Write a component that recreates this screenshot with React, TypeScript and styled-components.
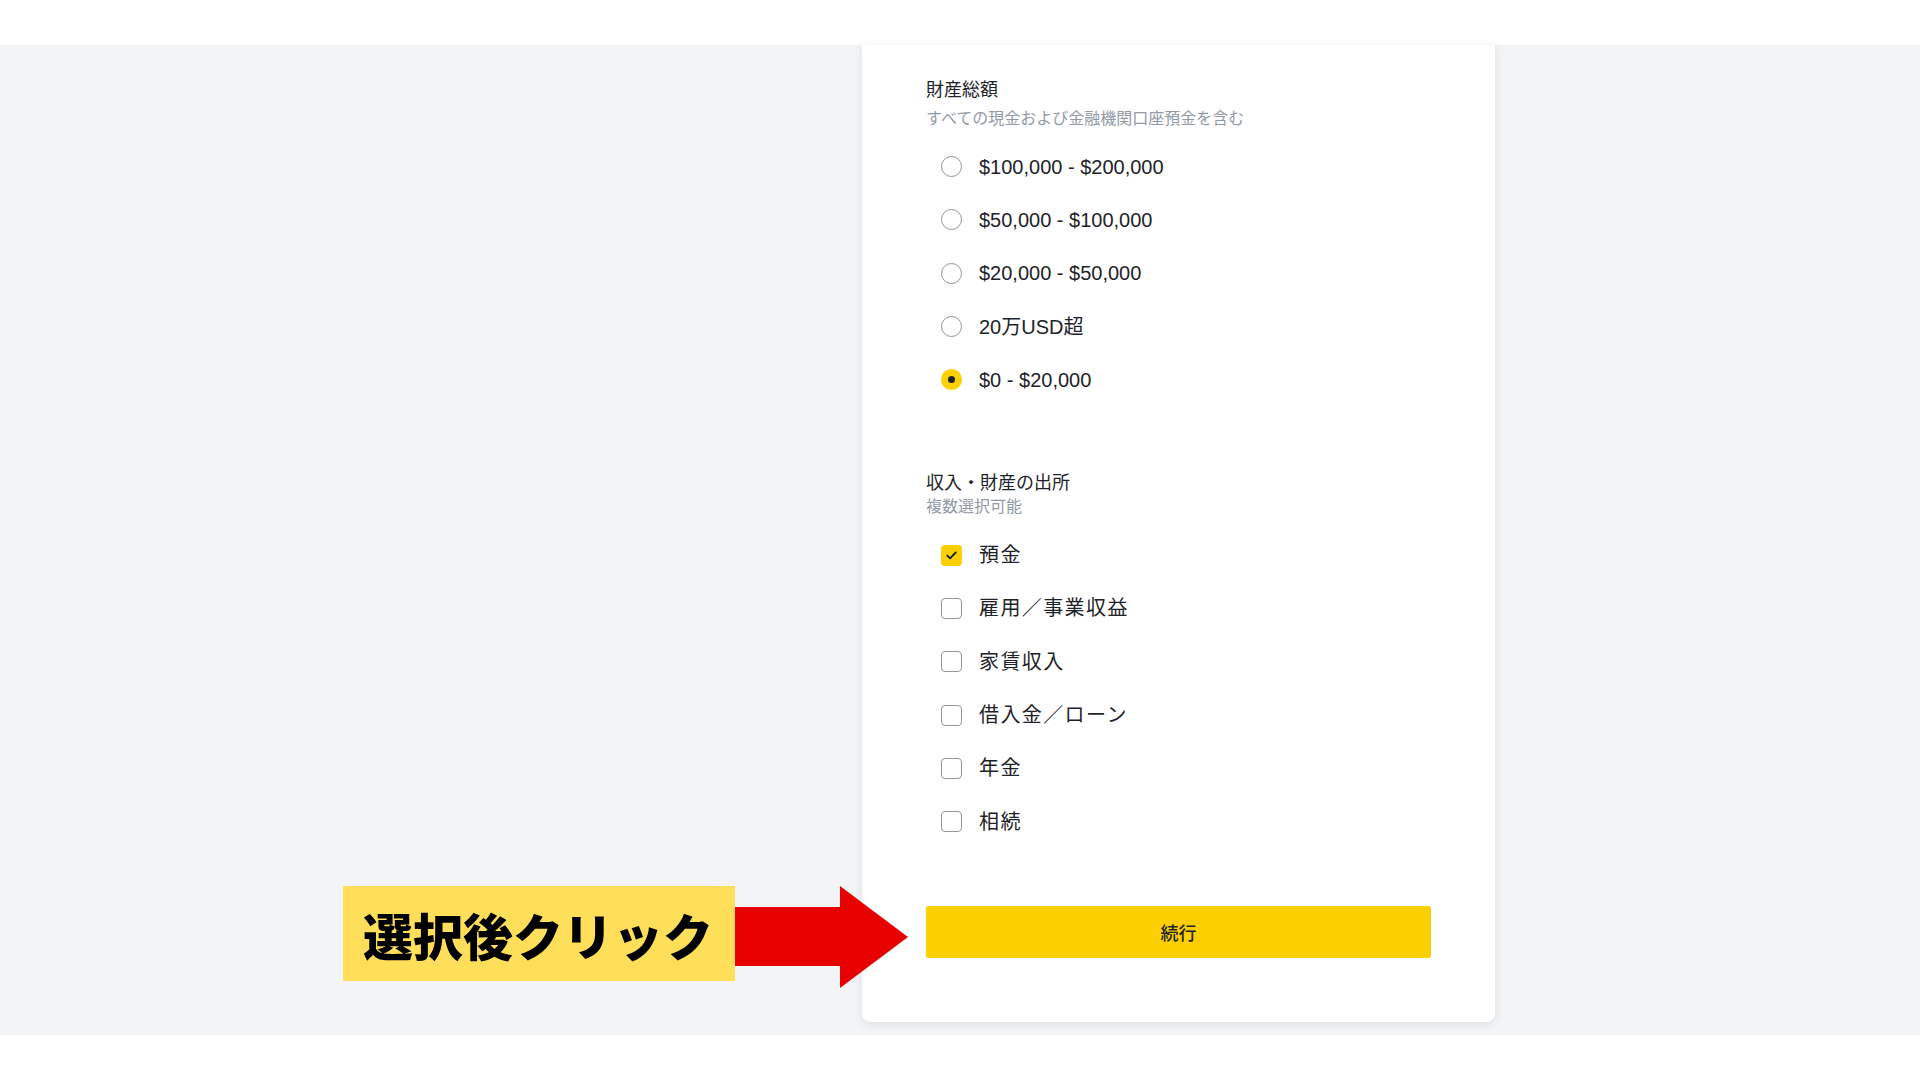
import styled, { createGlobalStyle } from "styled-components";

const GlobalStyle = createGlobalStyle`
  body {
    margin: 0;
    background: #ffffff;
    font-family: "Liberation Sans", "Noto Sans CJK JP", sans-serif;
    color: #1e2329;
  }
`;

const Page = styled.div`
  position: relative;
  width: 1920px;
  height: 1080px;
  padding: 45px 0;
  box-sizing: border-box;
`;

const Band = styled.div`
  display: flex;
  align-items: flex-start;
  height: 990px;
  padding-left: 862px;
  background: #f3f4f5;
  box-sizing: border-box;
`;

const Card = styled.div`
  width: 633px;
  padding: 33px 64px 64px 64px;
  box-sizing: border-box;
  background: #ffffff;
  border-radius: 0 0 8px 8px;
  box-shadow: 0 2px 10px rgba(0, 0, 0, 0.09);
  display: flex;
  flex-direction: column;
`;

const Heading = styled.div<{ $gap?: number }>`
  margin-top: ${(p) => p.$gap ?? 0}px;
  font-size: 18px;
  line-height: 24px;
  color: #1e2329;
`;

const Hint = styled.div<{ $gap: number }>`
  margin-top: ${(p) => p.$gap}px;
  font-size: 16px;
  line-height: 22px;
  color: #929aa5;
`;

const OptionList = styled.div`
  margin-top: 10px;
  display: flex;
  flex-direction: column;
`;

const Option = styled.label`
  display: flex;
  align-items: center;
  height: 53.3px;
  padding-left: 15px;
  gap: 17px;
  cursor: pointer;
`;

const Radio = styled.span<{ $on?: boolean }>`
  width: 21px;
  height: 21px;
  box-sizing: border-box;
  border-radius: 50%;
  border: ${(p) => (p.$on ? "none" : "1.5px solid #8f959c")};
  background: ${(p) => (p.$on ? "#fcd000" : "#ffffff")};
  display: flex;
  align-items: center;
  justify-content: center;
  flex-shrink: 0;

  &::after {
    content: "";
    display: ${(p) => (p.$on ? "block" : "none")};
    width: 7px;
    height: 7px;
    border-radius: 50%;
    background: #1e2329;
  }
`;

const Box = styled.span<{ $on?: boolean }>`
  width: 21px;
  height: 21px;
  box-sizing: border-box;
  border-radius: 4px;
  border: ${(p) => (p.$on ? "none" : "1.5px solid #8f959c")};
  background: ${(p) => (p.$on ? "#fcd000" : "#ffffff")};
  display: flex;
  align-items: center;
  justify-content: center;
  flex-shrink: 0;
`;

const Label = styled.span<{ $cjk?: boolean }>`
  font-size: 20px;
  letter-spacing: ${(p) => (p.$cjk ? "1.4px" : "0")};
  line-height: 24px;
  color: #1e2329;
`;

const Continue = styled.button`
  margin-top: 58px;
  height: 52px;
  width: 100%;
  border: none;
  border-radius: 3px;
  background: #fcd000;
  font-family: "Noto Sans CJK JP", sans-serif;
  font-size: 18px;
  font-weight: 500;
  color: #1e2329;
  cursor: pointer;
`;

const Callout = styled.div`
  position: absolute;
  left: 343px;
  top: 886px;
  display: flex;
  align-items: flex-start;
`;

const CalloutTag = styled.div`
  width: 392px;
  height: 95px;
  box-sizing: border-box;
  padding-left: 20px;
  background: #ffde59;
  display: flex;
  align-items: center;
  font-family: "Noto Sans CJK JP", sans-serif;
  font-size: 50px;
  font-weight: 900;
  color: #000000;
`;

const Arrow = styled.svg`
  display: block;
`;

const wealth = [
  { label: "$100,000 - $200,000" },
  { label: "$50,000 - $100,000" },
  { label: "$20,000 - $50,000" },
  { label: "20万USD超" },
  { label: "$0 - $20,000", on: true },
];

const sources = [
  { label: "預金", on: true },
  { label: "雇用／事業収益" },
  { label: "家賃収入" },
  { label: "借入金／ローン" },
  { label: "年金" },
  { label: "相続" },
];

function Check() {
  return (
    <svg width="11" height="9" viewBox="0 0 11 9" fill="none">
      <path d="M1.3 4.6 L4.1 7.3 L9.7 1.5" stroke="#1e2329" strokeWidth="1.9" strokeLinecap="round" strokeLinejoin="round" />
    </svg>
  );
}

export default function App() {
  return (
    <>
      <GlobalStyle />
      <Page>
        <Band>
          <Card>
            <Heading>財産総額</Heading>
            <Hint $gap={6}>すべての現金および金融機関口座預金を含む</Hint>
            <OptionList>
              {wealth.map((w) => (
                <Option key={w.label}>
                  <Radio $on={w.on} />
                  <Label>{w.label}</Label>
                </Option>
              ))}
            </OptionList>

            <Heading $gap={65}>収入・財産の出所</Heading>
            <Hint $gap={1}>複数選択可能</Hint>
            <OptionList>
              {sources.map((s) => (
                <Option key={s.label}>
                  <Box $on={s.on}>{s.on && <Check />}</Box>
                  <Label $cjk>{s.label}</Label>
                </Option>
              ))}
            </OptionList>

            <Continue>続行</Continue>
          </Card>
        </Band>

        <Callout>
          <CalloutTag>選択後クリック</CalloutTag>
          <Arrow width="173" height="102" viewBox="0 0 173 102">
            <polygon points="0,21 105,21 105,0 173,51 105,102 105,80 0,80" fill="#e60000" />
          </Arrow>
        </Callout>
      </Page>
    </>
  );
}
